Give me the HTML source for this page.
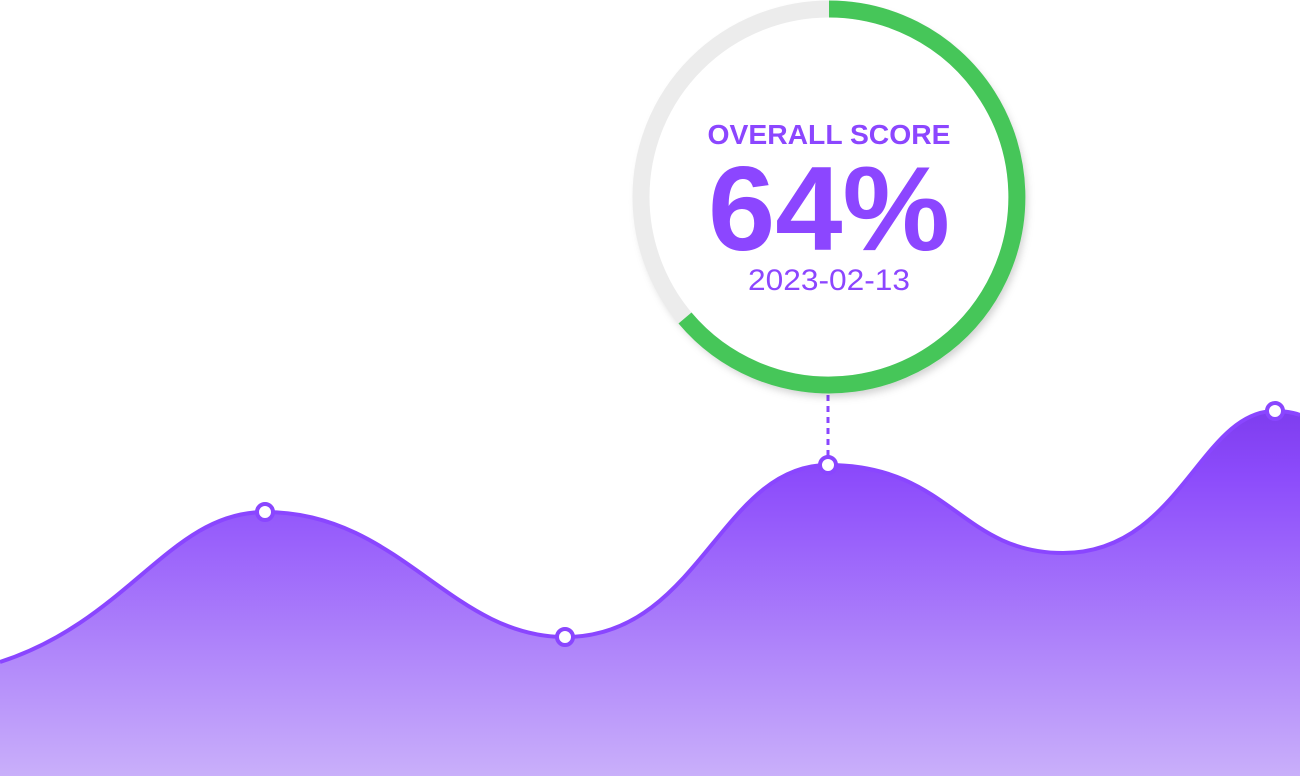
<!DOCTYPE html>
<html><head><meta charset="utf-8"><style>
html,body{margin:0;padding:0;background:#fff;width:1300px;height:776px;overflow:hidden}
</style></head><body>
<svg width="1300" height="776" viewBox="0 0 1300 776" xmlns="http://www.w3.org/2000/svg">
<defs>
<linearGradient id="fill" x1="0" y1="400" x2="0" y2="776" gradientUnits="userSpaceOnUse">
<stop offset="0" stop-color="#7c3aed" stop-opacity="1"/>
<stop offset="0.2" stop-color="#8c4bfb"/>
<stop offset="1" stop-color="#c9affa"/>
</linearGradient>
<filter id="sh" x="-20%" y="-20%" width="140%" height="140%"><feDropShadow dx="3" dy="5" stdDeviation="4" flood-color="#000" flood-opacity="0.18"/></filter>
</defs>
<path d="M0,662 C130,620 170,512 265,512 C400,512 450,637 565,637 C700,637 720,465 828,465 C950,465 960,553 1063,553 C1180,553 1200,411 1275,411 C1290,411 1300,415 1300,415 L1300,776 L0,776 Z" fill="url(#fill)"/>
<path d="M0,662 C130,620 170,512 265,512 C400,512 450,637 565,637 C700,637 720,465 828,465 C950,465 960,553 1063,553 C1180,553 1200,411 1275,411 C1290,411 1300,415 1300,415" fill="none" stroke="#8a46ff" stroke-width="4"/>
<line x1="828" y1="395" x2="828" y2="460" stroke="#8a46ff" stroke-width="3" stroke-dasharray="6,5"/>
<g fill="#fff" stroke="#8a46ff" stroke-width="4">
<circle cx="265" cy="512" r="8"/><circle cx="565" cy="637" r="8"/><circle cx="828" cy="465" r="8"/><circle cx="1275" cy="411" r="8"/>
</g>
<circle cx="829" cy="197" r="195" fill="#fff" filter="url(#sh)"/>
<circle cx="829" cy="197" r="188" fill="none" stroke="#ececec" stroke-width="17"/>
<path d="M829,9 A188,188 0 1 1 685,318" fill="none" stroke="#46c659" stroke-width="17"/>
<g font-family="'Liberation Sans',sans-serif" fill="#8c46ff" text-anchor="middle">
<text x="829" y="144" font-size="28" font-weight="bold" textLength="243" lengthAdjust="spacingAndGlyphs">OVERALL SCORE</text>
<text x="829" y="250" font-size="120" font-weight="bold" textLength="242" lengthAdjust="spacingAndGlyphs">64%</text>
<text x="829" y="290" font-size="30" textLength="162" lengthAdjust="spacingAndGlyphs">2023-02-13</text>
</g>
</svg>
</body></html>
